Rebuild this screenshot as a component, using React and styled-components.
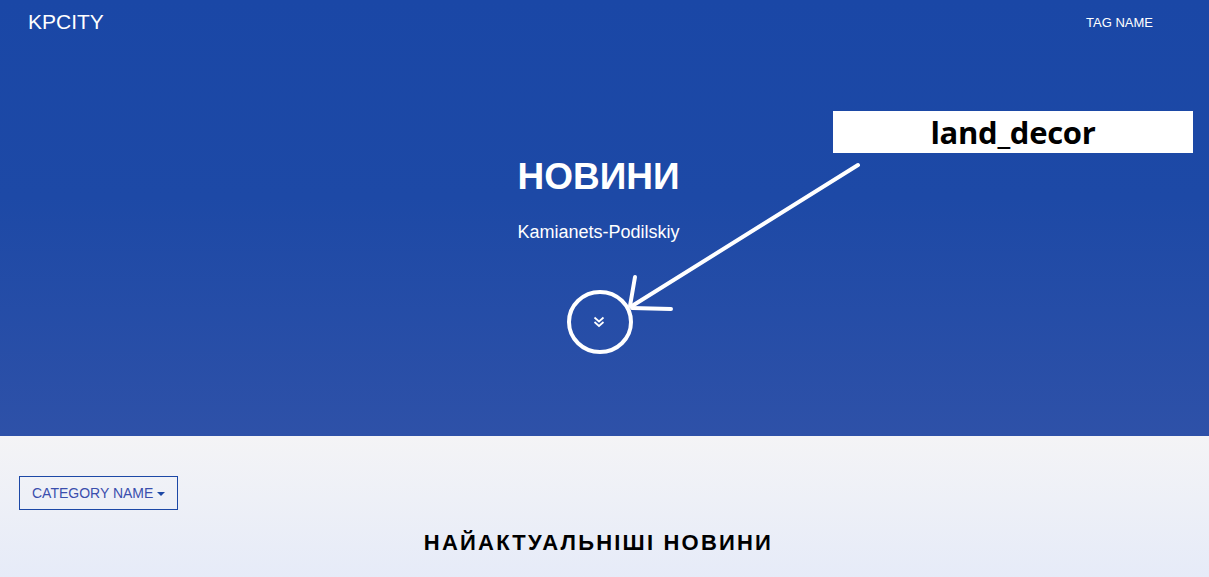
import React from "react";
import styled, { createGlobalStyle } from "styled-components";

const GlobalStyle = createGlobalStyle`
  html, body {
    margin: 0;
    padding: 0;
  }
  body {
    font-family: "Liberation Sans", Arial, sans-serif;
    overflow: hidden;
  }
  * {
    box-sizing: border-box;
  }
`;

const Page = styled.div`
  position: relative;
  width: 1209px;
  height: 577px;
  overflow: hidden;
`;

const Hero = styled.header`
  height: 436px;
  background: linear-gradient(180deg, #1a47a6 0%, #1d49a6 45%, #2e51a8 100%);
  color: #fff;
  display: flex;
  flex-direction: column;
`;

const Nav = styled.nav`
  height: 44px;
  display: flex;
  align-items: center;
  justify-content: space-between;
  padding: 0 56px 0 28px;
`;

const Brand = styled.a`
  font-size: 21px;
  color: #fff;
  text-decoration: none;
`;

const NavLink = styled.a`
  font-size: 13px;
  color: #fff;
  text-decoration: none;
`;

const HeroBody = styled.div`
  display: flex;
  flex-direction: column;
  align-items: center;
  padding: 112px 12px 0 0;
`;

const Title = styled.h1`
  margin: 0;
  font-size: 37px;
  font-weight: 700;
  line-height: 42px;
`;

const Subtitle = styled.p`
  margin: 23px 0 0;
  font-size: 18px;
  line-height: 22px;
`;

const ScrollDown = styled.a`
  margin-top: 69px;
  display: flex;
  align-items: center;
  justify-content: center;
  width: 20px;
  height: 20px;
  color: #fff;
`;

const Content = styled.main`
  height: 141px;
  background: linear-gradient(180deg, #f4f4f6 0%, #e6ebf8 100%);
  padding: 40px 31px 0 19px;
  display: flex;
  flex-direction: column;
`;

const CategoryButton = styled.button`
  align-self: flex-start;
  height: 34px;
  padding: 0 12px;
  border: 1px solid #1c48a6;
  background: transparent;
  color: #3a4ead;
  font-family: "Liberation Sans", Arial, sans-serif;
  font-size: 14px;
  display: flex;
  align-items: center;
  gap: 4px;
  cursor: pointer;
`;

const Caret = styled.span`
  width: 0;
  height: 0;
  border-left: 4px solid transparent;
  border-right: 4px solid transparent;
  border-top: 4px solid #1c48a6;
  margin-top: 2px;
`;

const SectionTitle = styled.h2`
  margin: 20px 0 0;
  text-align: center;
  font-size: 22px;
  font-weight: 700;
  letter-spacing: 2.2px;
  color: #000;
`;

const Annotation = styled.div`
  position: absolute;
  left: 0;
  top: 0;
  width: 1209px;
  height: 577px;
  pointer-events: none;
`;

const Label = styled.div`
  position: absolute;
  left: 833px;
  top: 111px;
  width: 360px;
  height: 42px;
  background: #fff;
  color: #000;
  display: flex;
  align-items: center;
  justify-content: center;
  font-family: "Open Sans", sans-serif;
  font-weight: 700;
  font-size: 31px;
  letter-spacing: -0.3px;
`;

const Sketch = styled.svg`
  position: absolute;
  left: 0;
  top: 0;
`;

const App = () => {
  return (
    <Page>
      <GlobalStyle />
      <Hero>
        <Nav>
          <Brand href="#">KPCITY</Brand>
          <NavLink href="#">TAG NAME</NavLink>
        </Nav>
        <HeroBody>
          <Title>НОВИНИ</Title>
          <Subtitle>Kamianets-Podilskiy</Subtitle>
          <ScrollDown href="#">
            <svg width="12" height="12" viewBox="0 0 12 12" fill="none" stroke="#fff" strokeWidth="1.7">
              <polyline points="1.5,1.5 6,5.5 10.5,1.5" />
              <polyline points="1.5,6 6,10 10.5,6" />
            </svg>
          </ScrollDown>
        </HeroBody>
      </Hero>
      <Content>
        <CategoryButton>
          CATEGORY NAME <Caret />
        </CategoryButton>
        <SectionTitle>НАЙАКТУАЛЬНІШІ НОВИНИ</SectionTitle>
      </Content>
      <Annotation>
        <Label>land_decor</Label>
        <Sketch width="1209" height="577" fill="none" stroke="#fff" strokeWidth="4" strokeLinecap="round">
          <line x1="858" y1="165" x2="632" y2="306" />
          <line x1="635" y1="277" x2="630" y2="306" />
          <line x1="632" y1="308" x2="671" y2="309" />
          <ellipse cx="600" cy="322" rx="31" ry="30" />
        </Sketch>
      </Annotation>
    </Page>
  );
};

export default App;
